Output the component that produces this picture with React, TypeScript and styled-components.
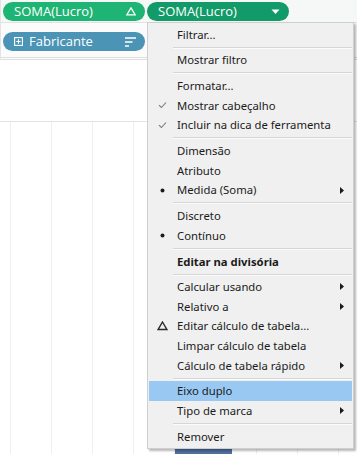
import React from 'react';
import styled, { createGlobalStyle } from 'styled-components';

type Mark = 'check' | 'dot' | 'delta';

interface MenuEntry {
  label: string;
  mark?: Mark;
  sub?: boolean;
  bold?: boolean;
  active?: boolean;
  sepAfter?: boolean;
}

const menuItems: MenuEntry[] = [
  { label: 'Filtrar...', sepAfter: true },
  { label: 'Mostrar filtro', sepAfter: true },
  { label: 'Formatar...' },
  { label: 'Mostrar cabeçalho', mark: 'check' },
  { label: 'Incluir na dica de ferramenta', mark: 'check', sepAfter: true },
  { label: 'Dimensão' },
  { label: 'Atributo' },
  { label: 'Medida (Soma)', mark: 'dot', sub: true, sepAfter: true },
  { label: 'Discreto' },
  { label: 'Contínuo', mark: 'dot', sepAfter: true },
  { label: 'Editar na divisória', bold: true, sepAfter: true },
  { label: 'Calcular usando', sub: true },
  { label: 'Relativo a', sub: true },
  { label: 'Editar cálculo de tabela...', mark: 'delta' },
  { label: 'Limpar cálculo de tabela' },
  { label: 'Cálculo de tabela rápido', sub: true, sepAfter: true },
  { label: 'Eixo duplo', active: true },
  { label: 'Tipo de marca', sub: true, sepAfter: true },
  { label: 'Remover' },
];

const gridColumns = 9;

const GlobalStyle = createGlobalStyle`
  html, body {
    margin: 0;
    padding: 0;
    background: #ffffff;
  }
  body {
    font-family: 'Noto Sans', 'Open Sans', sans-serif;
  }
`;

const Page = styled.div`
  position: relative;
  width: 357px;
  height: 454px;
  overflow: hidden;
  background: #ffffff;
  display: flex;
  flex-direction: column;
`;

const Shelf = styled.div<{ $height: number; $bg: string }>`
  height: ${({ $height }) => $height}px;
  box-sizing: border-box;
  background: ${({ $bg }) => $bg};
  border-left: 1px solid #e3e3e3;
  border-bottom: 1px solid #e2e2e2;
  padding: 2px 0 0 2px;
  display: flex;
  align-items: flex-start;
  gap: 2px;
`;

const RowsShelf = styled(Shelf)`
  padding-top: 9px;
  border-bottom: 3px double #e0e0e0;
`;

const Pill = styled.div<{ $bg: string }>`
  width: 142px;
  height: 19px;
  box-sizing: border-box;
  border-radius: 10px;
  background: ${({ $bg }) => $bg};
  color: #ffffff;
  font-family: 'Open Sans', 'Noto Sans', sans-serif;
  font-size: 13px;
  font-weight: 500;
  display: flex;
  align-items: center;
  padding: 0 9px 0 11px;
  gap: 6px;
`;

const PillText = styled.span`
  flex: 1;
  white-space: nowrap;
  line-height: 1;
`;

const HeaderArea = styled.div`
  height: 61px;
  border-bottom: 1px solid #e4e4e4;
  background: #ffffff;
`;

const Chart = styled.div`
  position: relative;
  flex: 1;
  display: flex;
  padding-left: 10px;
`;

const GridColumn = styled.div`
  width: 41px;
  flex: none;
  border-left: 1px solid #efefef;
  box-sizing: border-box;
`;

const Bar = styled.div`
  position: absolute;
  left: 175px;
  bottom: 0;
  width: 57px;
  height: 40px;
  background: #4f6f9f;
`;

const Menu = styled.div`
  position: absolute;
  left: 147px;
  top: 22px;
  width: 207px;
  box-sizing: border-box;
  background: #f0f0f0;
  border: 1px solid #cfcfcf;
  box-shadow: 2px 2px 2px rgba(0, 0, 0, 0.28);
  padding: 1.5px 1px 1.5px 1px;
  font-family: 'Segoe UI', 'Noto Sans', 'Open Sans', sans-serif;
  font-size: 11.3px;
  color: #1b1b1b;
`;

const Item = styled.div<{ $active?: boolean; $bold?: boolean }>`
  height: 19.6px;
  display: flex;
  align-items: center;
  background: ${({ $active }) => ($active ? '#99c9f3' : 'transparent')};
  font-weight: ${({ $bold }) => ($bold ? 700 : 400)};
  white-space: nowrap;
`;

const Gutter = styled.span`
  width: 28px;
  flex: none;
  display: flex;
  align-items: center;
  justify-content: center;
  padding-right: 2px;
  box-sizing: border-box;
`;

const Label = styled.span`
  flex: 1;
  line-height: 1;
`;

const SubArrow = styled.span`
  width: 12px;
  flex: none;
  display: flex;
  align-items: center;
`;

const Separator = styled.div`
  height: 6.2px;
  display: flex;
  align-items: center;
  padding-left: 24px;

  &::before {
    content: '';
    flex: 1;
    height: 1px;
    background: #d6d6d6;
    box-shadow: 0 1px 0 #fbfbfb;
  }
`;

const CheckIcon = () => (
  <svg width="9" height="8" viewBox="0 0 9 8">
    <path d="M1 4.2 L3.4 6.5 L8 1.5" fill="none" stroke="#7a7a7a" strokeWidth="1.1" />
  </svg>
);

const DotIcon = () => (
  <svg width="5" height="5" viewBox="0 0 5 5">
    <circle cx="2.5" cy="2.5" r="2" fill="#1b1b1b" />
  </svg>
);

const DeltaIcon = ({ color = '#2a2a2a', size = 11 }: { color?: string; size?: number }) => (
  <svg width={size} height={size * 0.85} viewBox="0 0 11 9.4">
    <path d="M5.5 1 L10 8.6 L1 8.6 Z" fill="none" stroke={color} strokeWidth="1.4" strokeLinejoin="miter" />
  </svg>
);

const ArrowIcon = () => (
  <svg width="4" height="7" viewBox="0 0 4 7">
    <path d="M0 0 L4 3.5 L0 7 Z" fill="#1b1b1b" />
  </svg>
);

const CaretDown = () => (
  <svg width="9" height="6" viewBox="0 0 9 6">
    <path d="M0.5 0.5 L8.5 0.5 L4.5 5 Z" fill="#ffffff" />
  </svg>
);

const AddBoxIcon = () => (
  <svg width="9" height="9" viewBox="0 0 9 9">
    <rect x="0.6" y="0.6" width="7.8" height="7.8" fill="none" stroke="#ffffff" strokeWidth="1.1" />
    <path d="M4.5 2.3 V6.7 M2.3 4.5 H6.7" stroke="#ffffff" strokeWidth="1.1" />
  </svg>
);

const SortIcon = () => (
  <svg width="11" height="10" viewBox="0 0 11 10">
    <path d="M0 1 H11 M0 5 H7.5 M0 9 H4" stroke="#ffffff" strokeWidth="1.6" />
  </svg>
);

const markIcon = (mark?: Mark) => {
  if (mark === 'check') return <CheckIcon />;
  if (mark === 'dot') return <DotIcon />;
  if (mark === 'delta') return <DeltaIcon />;
  return null;
};

const App: React.FC = () => {
  return (
    <Page>
      <GlobalStyle />
      <Shelf $height={23} $bg="#f6f7f7">
        <Pill $bg="#1eb473">
          <PillText>SOMA(Lucro)</PillText>
          <DeltaIcon color="#ffffff" size={10} />
        </Pill>
        <Pill $bg="#129a68">
          <PillText>SOMA(Lucro)</PillText>
          <CaretDown />
        </Pill>
      </Shelf>
      <RowsShelf $height={37} $bg="#fbfbfb">
        <Pill $bg="#4b94b5">
          <AddBoxIcon />
          <PillText>Fabricante</PillText>
          <SortIcon />
        </Pill>
      </RowsShelf>
      <HeaderArea />
      <Chart>
        {Array.from({ length: gridColumns }, (_, i) => (
          <GridColumn key={i} />
        ))}
        <Bar />
      </Chart>

      <Menu>
        {menuItems.map((item) => (
          <React.Fragment key={item.label}>
            <Item $active={item.active} $bold={item.bold}>
              <Gutter>{markIcon(item.mark)}</Gutter>
              <Label>{item.label}</Label>
              <SubArrow>{item.sub && <ArrowIcon />}</SubArrow>
            </Item>
            {item.sepAfter && <Separator />}
          </React.Fragment>
        ))}
      </Menu>
    </Page>
  );
};

export default App;
